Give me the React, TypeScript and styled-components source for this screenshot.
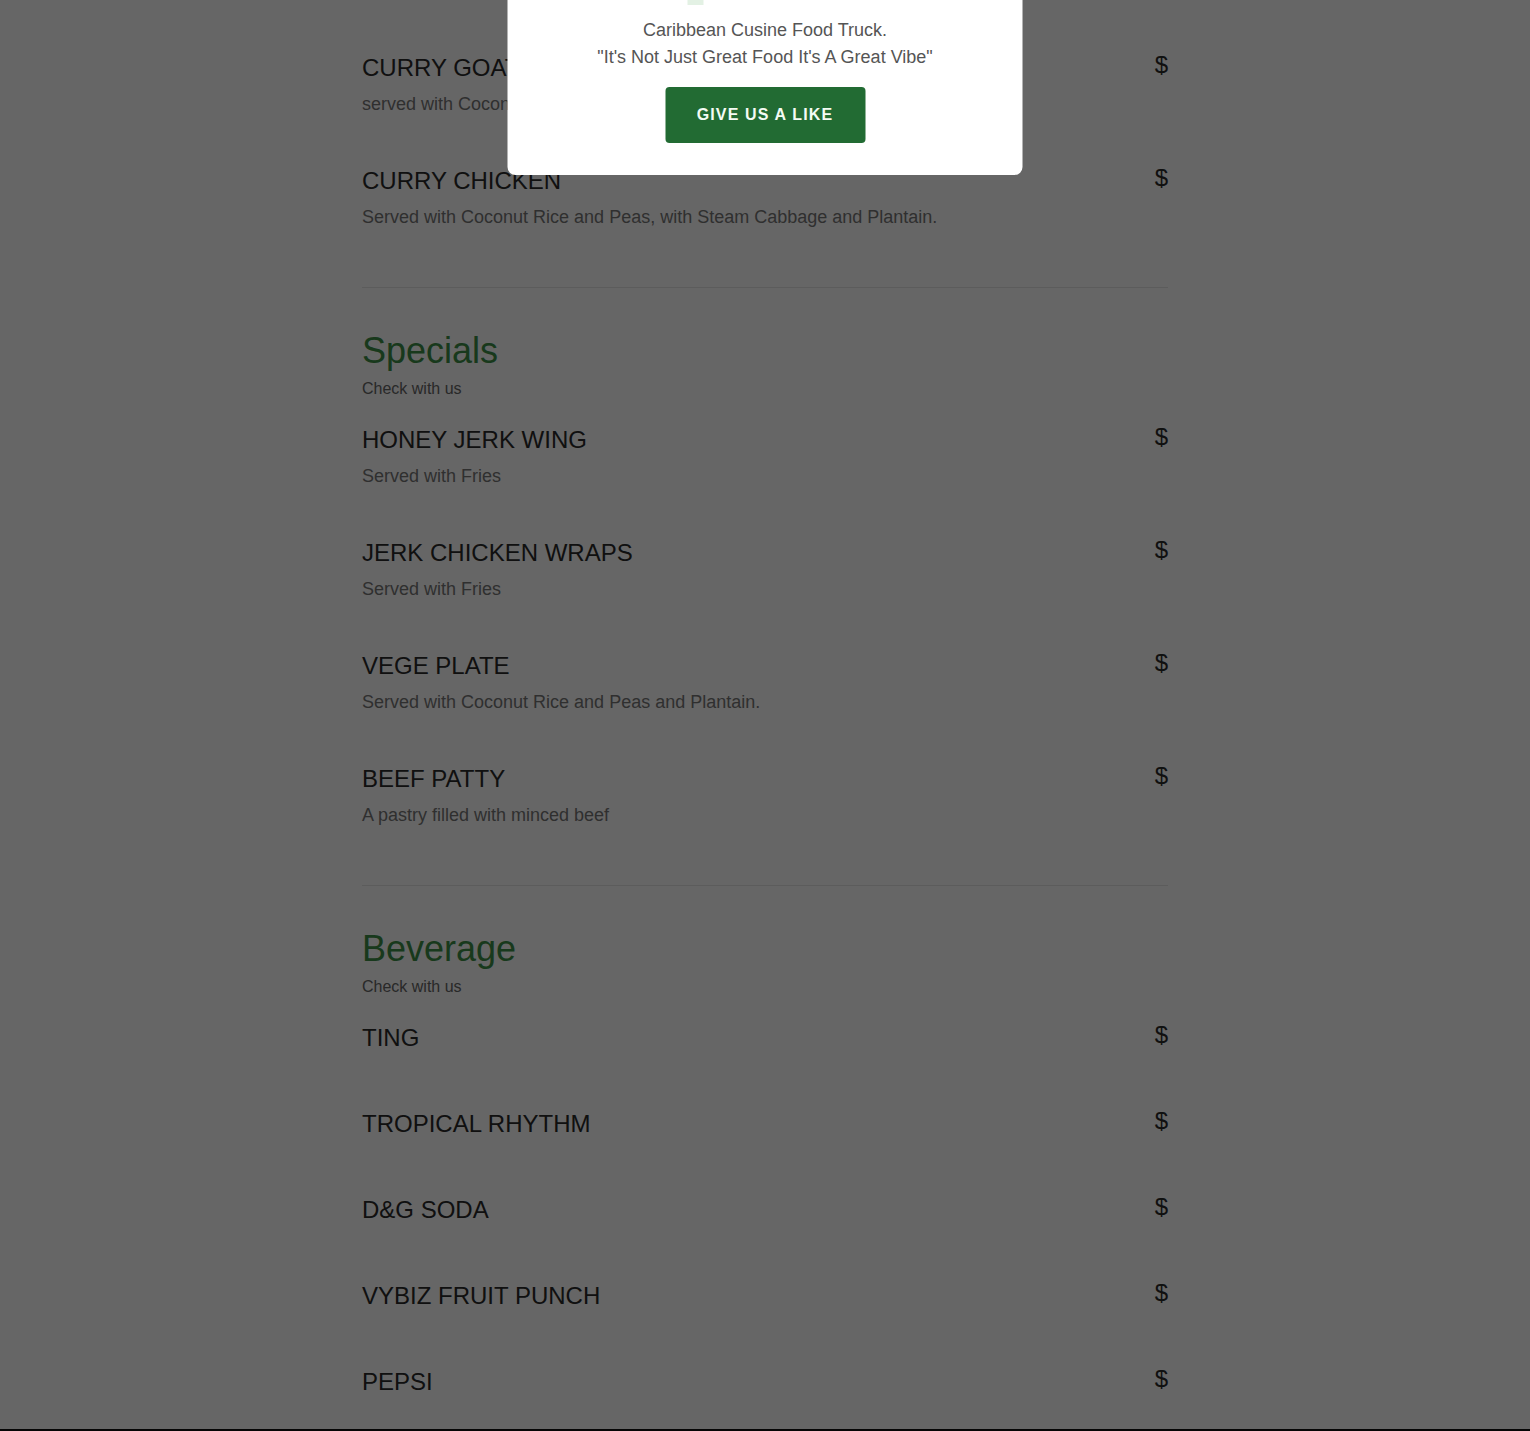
import React from 'react';
import styled, { createGlobalStyle } from 'styled-components';

interface IMenuItem {
	name: string;
	desc?: string;
}

interface ISection {
	title?: string;
	note?: string;
	items: IMenuItem[];
	last?: boolean;
}

const GlobalStyle = createGlobalStyle`
	html, body {
		margin: 0;
		padding: 0;
		background: #ffffff;
		font-family: 'Liberation Sans', Arial, sans-serif;
	}
`;

const Page = styled.div`
	min-height: 1431px;
	display: flex;
	flex-direction: column;
`;

const Menu = styled.main`
	width: 806px;
	margin: 0 auto;
	padding-top: 53px;
`;

const Section = styled.section<{ $last?: boolean }>`
	padding-bottom: ${p => (p.$last ? '24px' : '56px')};
	border-bottom: ${p => (p.$last ? 'none' : '1px solid #e6e6e6')};
	margin-bottom: ${p => (p.$last ? '0' : '41px')};
`;

const Heading = styled.h2`
	margin: 0;
	font-size: 36px;
	line-height: 44px;
	font-weight: 400;
	color: #3d8f48;
`;

const Note = styled.p`
	margin: 6px 0 26px;
	font-size: 16px;
	line-height: 20px;
	color: #666;
`;

const ItemList = styled.ul`
	list-style: none;
	margin: 0;
	padding: 0;
	display: flex;
	flex-direction: column;
	gap: 48px;
`;

const Item = styled.li`
	display: flex;
	justify-content: space-between;
	align-items: flex-start;
`;

const ItemText = styled.div`
	display: flex;
	flex-direction: column;
`;

const ItemName = styled.h3`
	margin: 0 0 8px;
	font-size: 24px;
	line-height: 30px;
	font-weight: 400;
	color: #2a2a2a;
	text-transform: uppercase;
`;

const ItemDesc = styled.p`
	margin: 0;
	font-size: 18px;
	line-height: 27px;
	color: #777;
`;

const Price = styled.span`
	font-size: 24px;
	line-height: 24px;
	color: #2a2a2a;
`;

const Footer = styled.footer`
	flex: 1;
	background: #111;
	min-height: 60px;
`;

const Overlay = styled.div`
	position: fixed;
	inset: 0;
	background: rgba(0, 0, 0, 0.6);
	z-index: 10;
`;

const Modal = styled.div`
	position: fixed;
	top: -117px;
	left: 50%;
	transform: translateX(-50%);
	width: 515px;
	box-sizing: border-box;
	padding: 32px 20px 32px;
	background: #fff;
	border-radius: 8px;
	z-index: 11;
	display: flex;
	flex-direction: column;
	align-items: center;
	text-align: center;
`;

const Logo = styled.svg`
	display: block;
	margin-bottom: 12px;
`;

const Tagline = styled.p`
	margin: 0 0 16px;
	font-size: 18px;
	line-height: 27px;
	color: #555;
`;

const LikeButton = styled.button`
	width: 200px;
	height: 56px;
	border: none;
	border-radius: 4px;
	background: #226b33;
	color: #f4fbf4;
	font-family: 'Liberation Sans', Arial, sans-serif;
	font-size: 16px;
	font-weight: 700;
	letter-spacing: 1.15px;
	cursor: pointer;
`;

const sections: ISection[] = [
	{
		items: [
			{ name: 'Curry Goat', desc: 'served with Coconut Rice and Peas, with Steam Cabbage and Plantain.' },
			{ name: 'Curry Chicken', desc: 'Served with Coconut Rice and Peas, with Steam Cabbage and Plantain.' }
		]
	},
	{
		title: 'Specials',
		note: 'Check with us',
		items: [
			{ name: 'Honey Jerk Wing', desc: 'Served with Fries' },
			{ name: 'Jerk Chicken Wraps', desc: 'Served with Fries' },
			{ name: 'Vege Plate', desc: 'Served with Coconut Rice and Peas and Plantain.' },
			{ name: 'Beef Patty', desc: 'A pastry filled with minced beef' }
		]
	},
	{
		title: 'Beverage',
		note: 'Check with us',
		last: true,
		items: [
			{ name: 'Ting' },
			{ name: 'Tropical Rhythm' },
			{ name: 'D&G Soda' },
			{ name: 'Vybiz Fruit Punch' },
			{ name: 'Pepsi' }
		]
	}
];

const App: React.FC = () => {
	return (
		<Page>
			<GlobalStyle />
			<Menu>
				{sections.map((section, i) => (
					<Section key={i} $last={section.last}>
						{section.title && <Heading>{section.title}</Heading>}
						{section.note && <Note>{section.note}</Note>}
						<ItemList>
							{section.items.map(item => (
								<Item key={item.name}>
									<ItemText>
										<ItemName>{item.name}</ItemName>
										{item.desc && <ItemDesc>{item.desc}</ItemDesc>}
									</ItemText>
									<Price>$</Price>
								</Item>
							))}
						</ItemList>
					</Section>
				))}
			</Menu>
			<Footer />

			<Overlay />
			<Modal>
				{/* truck logo, mostly above the fold */}
				<Logo width='220' height='90' viewBox='0 0 220 90'>
					<rect x='40' y='10' width='140' height='60' rx='8' fill='#236a33' />
					<circle cx='70' cy='74' r='10' fill='#1b1b1b' />
					<circle cx='150' cy='74' r='10' fill='#1b1b1b' />
					<rect x='32' y='85' width='16' height='5' fill='#e3f1e4' />
				</Logo>
				<Tagline>
					Caribbean Cusine Food Truck.
					<br />
					"It's Not Just Great Food It's A Great Vibe"
				</Tagline>
				<LikeButton>GIVE US A LIKE</LikeButton>
			</Modal>
		</Page>
	);
};

export default App;
